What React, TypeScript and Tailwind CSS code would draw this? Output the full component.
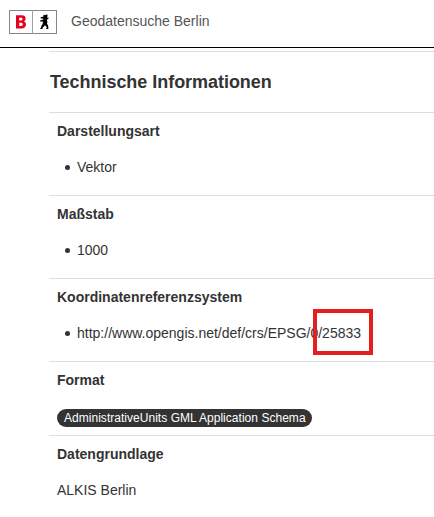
import type { ReactNode } from "react";

function Logo() {
  return (
    <svg width="48" height="25" viewBox="0 0 48 25" aria-label="Berlin">
      <rect x="0.5" y="0.5" width="47" height="23" fill="#fff" stroke="#858585" />
      <path d="M23.5 0V24" stroke="#a0a0a0" />
      <path
        fill="#e8001c"
        fillRule="evenodd"
        d="M7 5.3h5.6c2.6 0 4 1.2 4 3.3 0 1.4-.6 2.4-1.7 2.8 1.4.4 2.1 1.5 2.1 3.2 0 2.4-1.6 3.9-4.3 3.9H7zM10.2 7.7v2.7h1.8c1 0 1.5-.4 1.5-1.4s-.5-1.3-1.5-1.3zm0 5v3.3h2c1.1 0 1.6-.6 1.6-1.7s-.5-1.6-1.6-1.6z"
      />
      <path
        fill="#000"
        d="M34.4 5.2l1.1-.4.5.4 1.4-.8 1 .4.2 1.3-.5.8.2.8 1.2-.3.1 1-1.3.8-.3 1.2.4 1.7-.4 1.7 1.1 1.6.3 2.8-.3.7h-1.9v-.7l.5-.4-.3-1.3-1.6-1.3-1 1.5-.9.6-.5 1.7h-2.2v-.8l.9-.5.3-1.9 1.2-1.5.3-1.9-.4-1.1-1.2.3-1.1-.1-.1-.9 1.3-.6 1.3-.2 1.1-.8-1.6-.6-1.4.1-.3-.9 1.4-.8 1.3.2z"
      />
    </svg>
  );
}

function Row({ title, children }: { title: string; children: ReactNode }) {
  return (
    <section className="border-t border-[#ddd] px-2 pt-2">
      <h3 className="mb-4 font-bold">{title}</h3>
      {children}
    </section>
  );
}

function Item({ children }: { children: ReactNode }) {
  return (
    <ul className="mb-[18px]">
      <li className="flex items-center">
        <span className="mt-px mr-[7px] ml-2 size-[5px] rounded-full bg-[#333]" />
        {children}
      </li>
    </ul>
  );
}

export default function App() {
  return (
    <div className="h-[517px] w-full overflow-hidden bg-white font-['Liberation_Sans',Arial,sans-serif] text-sm leading-5 text-[#333]">
      <header className="flex h-12 items-start border-b border-black pt-[10px] pl-[9px]">
        <Logo />
        <span className="mt-px ml-[14px] text-[#555]">Geodatensuche Berlin</span>
      </header>
      <main className="ml-[49px] pt-[3px]">
        <h2 className="h-[61px] border-t border-[#ddd] pt-5 pl-px text-lg leading-5 font-bold tracking-[-0.04px]">
          Technische Informationen
        </h2>
        <Row title="Darstellungsart">
          <Item>Vektor</Item>
        </Row>
        <Row title="Maßstab">
          <Item>1000</Item>
        </Row>
        <Row title="Koordinatenreferenzsystem">
          <Item>
            <span className="relative whitespace-nowrap">
              http://www.opengis.net/def/crs/EPSG/0/25833
              <span className="absolute -top-[14px] left-[236px] h-[46px] w-[60px] border-4 border-[#e61e1e]" />
            </span>
          </Item>
        </Row>
        <Row title="Format">
          <div className="mt-[19px] mb-2 flex h-[18px] w-[255px] items-center rounded-full bg-[#333] pl-[7px] text-xs tracking-[0.03px] whitespace-nowrap text-white">
            AdministrativeUnits GML Application Schema
          </div>
        </Row>
        <Row title="Datengrundlage">
          <p>ALKIS Berlin</p>
        </Row>
      </main>
    </div>
  );
}
